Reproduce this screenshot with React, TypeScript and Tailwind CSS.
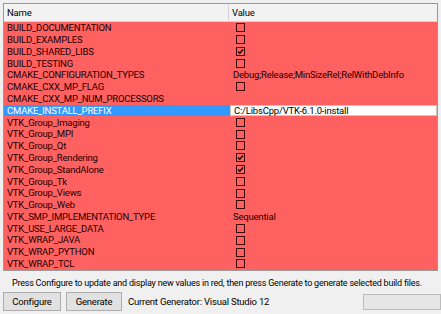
import React from 'react';

type Row = { name: string; value?: string; checked?: boolean; selected?: boolean };

const rows: Row[] = [
  { name: 'BUILD_DOCUMENTATION', checked: false },
  { name: 'BUILD_EXAMPLES', checked: false },
  { name: 'BUILD_SHARED_LIBS', checked: true },
  { name: 'BUILD_TESTING', checked: false },
  { name: 'CMAKE_CONFIGURATION_TYPES', value: 'Debug;Release;MinSizeRel;RelWithDebInfo' },
  { name: 'CMAKE_CXX_MP_FLAG', checked: false },
  { name: 'CMAKE_CXX_MP_NUM_PROCESSORS', value: '' },
  { name: 'CMAKE_INSTALL_PREFIX', value: 'C:/LibsCpp/VTK-6.1.0-install', selected: true },
  { name: 'VTK_Group_Imaging', checked: false },
  { name: 'VTK_Group_MPI', checked: false },
  { name: 'VTK_Group_Qt', checked: false },
  { name: 'VTK_Group_Rendering', checked: true },
  { name: 'VTK_Group_StandAlone', checked: true },
  { name: 'VTK_Group_Tk', checked: false },
  { name: 'VTK_Group_Views', checked: false },
  { name: 'VTK_Group_Web', checked: false },
  { name: 'VTK_SMP_IMPLEMENTATION_TYPE', value: 'Sequential' },
  { name: 'VTK_USE_LARGE_DATA', checked: false },
  { name: 'VTK_WRAP_JAVA', checked: false },
  { name: 'VTK_WRAP_PYTHON', checked: false },
  { name: 'VTK_WRAP_TCL', checked: false },
];

const CheckBox: React.FC<{ checked: boolean }> = ({ checked }) => (
  <div className="ml-[6px] w-[9px] h-[9px] border border-[#3a0a0a] flex items-center justify-center">
    {checked && (
      <svg width="7" height="7" viewBox="0 0 7 7">
        <path d="M1 3.5 L2.8 5.3 L6 1.5" fill="none" stroke="#1a0000" strokeWidth="1.4" />
      </svg>
    )}
  </div>
);

const App: React.FC = () => {
  return (
    <div
      className="w-[441px] h-[314px] bg-[#f0f0f0] flex flex-col overflow-hidden text-[9.5px] tracking-[-0.2px] leading-none"
      style={{ fontFamily: 'Roboto, "Liberation Sans", sans-serif' }}
    >
      <div className="mt-[3px] ml-[3px] w-[435px] h-[268px] border border-[#9a9a9a] bg-[#ff6060] flex flex-col">
        <div className="h-[18px] flex bg-[#f2f2f2] border-b border-[#d5d5d5] text-black">
          <div className="w-[225px] border-r border-[#d5d5d5] flex items-center pl-[3px]">Name</div>
          <div className="flex-1 flex items-center pl-[3px]">Value</div>
        </div>
        {rows.map((r) => (
          <div key={r.name} className="h-[11.8px] flex text-[#1a0000]">
            <div
              className={
                r.selected
                  ? 'w-[226px] bg-[#3399ff] text-white flex items-center pl-[3px]'
                  : 'w-[226px] flex items-center pl-[3px]'
              }
            >
              {r.name}
            </div>
            {r.selected ? (
              <div className="flex-1 bg-white border border-[#c8c8c8] flex items-center pl-[3px] text-black">
                {r.value}
              </div>
            ) : r.value !== undefined ? (
              <div className="flex-1 flex items-center pl-[3px]">{r.value}</div>
            ) : (
              <div className="flex-1 flex items-center">
                <CheckBox checked={!!r.checked} />
              </div>
            )}
          </div>
        ))}
      </div>
      <div className="mt-[8px] pl-[12px] text-black whitespace-nowrap text-[9px] tracking-[-0.22px]">
        Press Configure to update and display new values in red, then press Generate to generate selected build files.
      </div>
      <div className="mt-[4px] flex items-center">
        <button className="ml-[3px] w-[58px] h-[19px] bg-[#e1e1e1] border border-[#adadad] text-black">Configure</button>
        <button className="ml-[5px] w-[56px] h-[19px] bg-[#e1e1e1] border border-[#adadad] text-black">Generate</button>
        <span className="ml-[6px] text-black">Current Generator: Visual Studio 12</span>
        <div className="ml-auto w-[78px] h-[16px] bg-[#e6e6e6] border border-[#bcbcbc]" />
      </div>
    </div>
  );
};

export default App;
